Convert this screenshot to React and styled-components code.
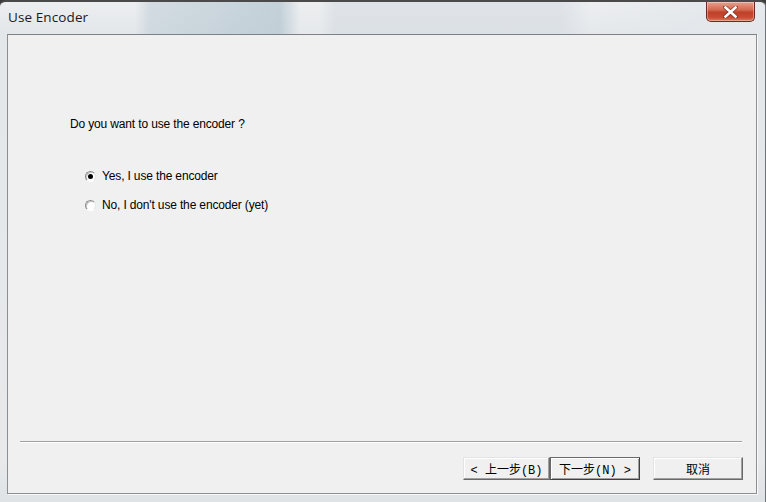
import React from "react";
import styled, { createGlobalStyle } from "styled-components";

const Global = createGlobalStyle`
  html, body { margin: 0; padding: 0; width: 766px; height: 502px; overflow: hidden; background: #3a3a3a; }
  #root { width: 766px; height: 502px; }
`;

const Frame = styled.div`
  width: 766px;
  height: 502px;
  box-sizing: border-box;
  display: flex;
  flex-direction: column;
  border-top: 2px solid #4a4a4a;
  border-right: 1px solid #6e7378;
  border-radius: 6px 6px 0 0;
  background:
    linear-gradient(90deg,
      rgba(255,255,255,0) 0px, rgba(255,255,255,0) 135px,
      rgba(190,205,214,0.55) 150px, rgba(170,190,202,0.6) 280px,
      rgba(236,238,240,0.3) 300px, rgba(236,238,240,0.3) 320px,
      rgba(214,220,226,0.6) 335px, rgba(214,220,226,0.6) 560px,
      rgba(236,238,240,0.2) 590px, rgba(226,230,234,0.5) 700px) 0 0 / 100% 32px no-repeat,
    linear-gradient(180deg, #eceef0 0px, #e4e7ea 30px, #e7e9eb 460px, #dfe2e5 502px);
`;

const TitleBar = styled.div`
  height: 30px;
  display: flex;
  align-items: flex-start;
  justify-content: space-between;
  padding: 0 10px 0 8px;
`;

const Title = styled.div`
  font-family: "Open Sans", "Noto Sans", sans-serif;
  font-size: 13.5px;
  color: #1a1a1a;
  line-height: 30px;
  letter-spacing: 0.1px;
`;

const CloseButton = styled.div`
  width: 49px;
  height: 20px;
  box-sizing: border-box;
  border: 1px solid #6b2a20;
  border-top: none;
  border-radius: 0 0 5px 5px;
  background: linear-gradient(180deg, #e8a08e 0%, #d46a52 40%, #c0412a 55%, #c84a32 80%, #dc7a5e 100%);
  box-shadow: inset 0 0 0 1px rgba(255,255,255,0.35);
  display: flex;
  align-items: center;
  justify-content: center;
`;

const Client = styled.div`
  flex: 1;
  margin: 2px 8px 8px 7px;
  border: 1px solid #8a8f94;
  border-top-color: #7c8186;
  background: #f0f0f0;
  display: flex;
  flex-direction: column;
  box-shadow: 1px 1px 0 #fafafa;
`;

const Body = styled.div`
  flex: 1;
  padding: 82px 0 0 62px;
  font-family: "Liberation Sans", Arial, sans-serif;
  font-size: 12px;
  letter-spacing: -0.15px;
  color: #000;
`;

const Question = styled.div`
  line-height: 14px;
  margin-bottom: 38px;
`;

const Options = styled.div`
  display: flex;
  flex-direction: column;
  gap: 15px;
  padding-left: 15px;
`;

const Option = styled.label`
  display: flex;
  align-items: center;
  gap: 6px;
  line-height: 14px;
`;

const Radio = styled.span`
  width: 11px;
  height: 11px;
  box-sizing: border-box;
  border-radius: 50%;
  border: 1px solid;
  border-color: #8c8c8c #e6e6e6 #ffffff #8c8c8c;
  background: #fff;
  display: flex;
  align-items: center;
  justify-content: center;
  box-shadow: inset 1px 1px 0 #c4c4c4;
  &::after {
    content: "";
    width: 5px;
    height: 5px;
    border-radius: 50%;
    background: ${(p) => (p.$checked ? "#000" : "transparent")};
  }
`;

const Separator = styled.div`
  height: 0;
  margin: 0 14px 0 12px;
  border-top: 1px solid #a0a0a0;
  border-bottom: 1px solid #ffffff;
`;

const ButtonRow = styled.div`
  display: flex;
  justify-content: flex-end;
  align-items: center;
  padding: 14px 13px 13px 0;
`;

const Button = styled.div`
  width: ${(p) => p.$w}px;
  height: 23px;
  box-sizing: border-box;
  margin-left: ${(p) => p.$gap || 0}px;
  background: #f0f0f0;
  border: 1px solid;
  border-color: ${(p) => (p.$default ? "#696969 #404040 #404040 #696969" : "#e3e3e3 #696969 #696969 #e3e3e3")};
  box-shadow: ${(p) => (p.$default ? "inset 1px 1px 0 #fff, inset -1px -1px 0 #a0a0a0" : "inset -1px -1px 0 #a0a0a0, inset 1px 1px 0 #fff")};
  display: flex;
  align-items: center;
  justify-content: center;
  font-family: "Liberation Mono", "Noto Sans CJK SC", monospace;
  font-size: 12px;
  color: #000;
  white-space: pre;
  padding-top: 1px;
`;

export default function App() {
  return (
    <>
      <Global />
      <Frame>
        <TitleBar>
          <Title>Use Encoder</Title>
          <CloseButton>
            <svg width="15" height="12" viewBox="0 0 15 12">
              <path d="M2 1 L13 11 M13 1 L2 11" stroke="#5a1a10" strokeWidth="4" strokeLinecap="square" opacity="0.6" />
              <path d="M2.5 1.5 L12.5 10.5 M12.5 1.5 L2.5 10.5" stroke="#ffffff" strokeWidth="2.6" strokeLinecap="square" />
            </svg>
          </CloseButton>
        </TitleBar>
        <Client>
          <Body>
            <Question>Do you want to use the encoder ?</Question>
            <Options>
              <Option>
                <Radio $checked />
                Yes, I use the encoder
              </Option>
              <Option>
                <Radio />
                No, I don't use the encoder (yet)
              </Option>
            </Options>
          </Body>
          <Separator />
          <ButtonRow>
            <Button $w={87}>{"< 上一步(B)"}</Button>
            <Button $w={90} $default>{"下一步(N) >"}</Button>
            <Button $w={90} $gap={13}>取消</Button>
          </ButtonRow>
        </Client>
      </Frame>
    </>
  );
}
